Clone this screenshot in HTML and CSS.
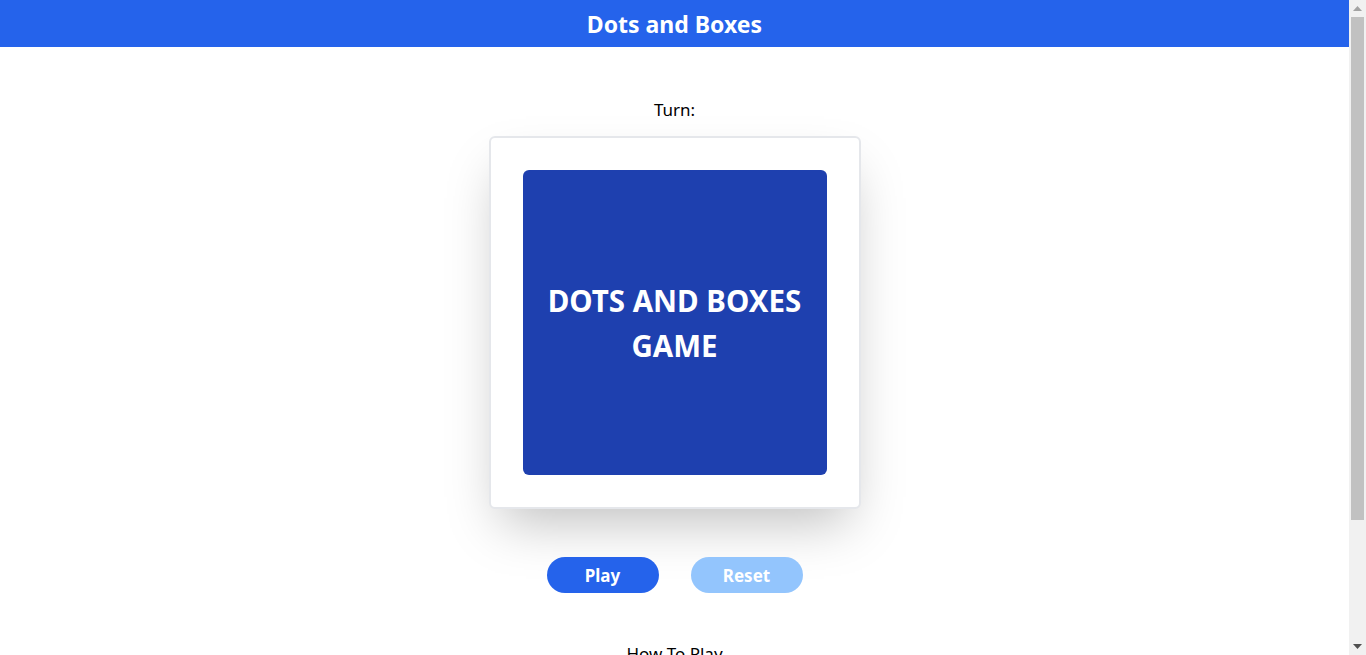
FILE: index.html
```
<!DOCTYPE html>
<html lang="en">

<head>
    <meta charset="UTF-8">
    <title>Dots and Boxes</title>
    <link rel="stylesheet" href="styles.css">
</head>

<body>
    <header class="top_bar">
        <h1>Dots and Boxes</h1>
    </header>

    <main class="game">
        <p class="turn">Turn: <span id="turn_name"></span></p>
        <div class="board_card">
            <div class="board">
                <p>Dots and Boxes<br>Game</p>
            </div>
        </div>
        <div class="controls">
            <button class="btn btn_play">Play</button>
            <button class="btn btn_reset" disabled>Reset</button>
        </div>
        <section class="rules">
            <h2>How To Play</h2>
            <ol>
                <li>Players take turns joining two adjacent dots with a line.</li>
                <li>Completing the fourth side of a box claims it and earns another turn.</li>
                <li>The game ends when every box is claimed.</li>
                <li>The player with the most boxes wins.</li>
            </ol>
        </section>
    </main>

    <!-- window scrollbar -->
    <div class="scroll_bar">
        <div class="scroll_btn">
            <svg width="9" height="5" viewBox="0 0 9 5"><polygon points="0,5 9,5 4.5,0" fill="#a3a3a3"/></svg>
        </div>
        <div class="scroll_track">
            <div class="scroll_thumb"></div>
        </div>
        <div class="scroll_btn">
            <svg width="9" height="5" viewBox="0 0 9 5"><polygon points="0,0 9,0 4.5,5" fill="#505050"/></svg>
        </div>
    </div>
</body>

</html>
```

FILE: styles.css
```
* {
    margin: 0;
    padding: 0;
    box-sizing: border-box;
}

html {
    overflow: hidden;
}

body {
    font-family: "Noto Sans", "Open Sans", sans-serif;
    color: #000;
    background: #fff;
    margin-right: 17px;
}

.top_bar {
    height: 47px;
    background: #2563eb;
    display: flex;
    align-items: center;
    justify-content: center;
}

.top_bar h1 {
    color: #fff;
    font-size: 23px;
    font-weight: 700;
}

.game {
    display: flex;
    flex-direction: column;
    align-items: center;
    padding-top: 53px;
    padding-bottom: 24px;
}

.turn {
    font-size: 17px;
    line-height: 20px;
    margin-bottom: 16px;
}

.board_card {
    width: 372px;
    height: 373px;
    padding: 32px;
    background: #fff;
    border: 2px solid #e5e7eb;
    border-radius: 6px;
    box-shadow: 0 25px 50px -12px rgba(0, 0, 0, 0.25);
}

.board {
    width: 100%;
    height: 100%;
    background: #1e40af;
    border-radius: 6px;
    display: flex;
    align-items: center;
    justify-content: center;
}

.board p {
    color: #fff;
    font-size: 29.5px;
    font-weight: 700;
    line-height: 45px;
    text-transform: uppercase;
    text-align: center;
}

.controls {
    display: flex;
    gap: 32px;
    margin-top: 48px;
}

.btn {
    width: 112px;
    height: 36px;
    border: none;
    border-radius: 18px;
    color: #fff;
    font-family: inherit;
    font-size: 17px;
    font-weight: 700;
    cursor: pointer;
}

.btn_play {
    background: #2563eb;
}

.btn_reset {
    background: #93c5fd;
    cursor: default;
}

.rules {
    margin-top: 51px;
    width: 600px;
    text-align: center;
}

.rules h2 {
    font-size: 17px;
    font-weight: 400;
    line-height: 20px;
    margin-bottom: 16px;
}

.rules ol {
    text-align: left;
    padding-left: 20px;
    line-height: 28px;
}

.scroll_bar {
    position: fixed;
    top: 0;
    right: 0;
    width: 17px;
    height: 100vh;
    background: #f1f1f1;
    display: flex;
    flex-direction: column;
}

.scroll_btn {
    height: 17px;
    display: flex;
    align-items: center;
    justify-content: center;
}

.scroll_track {
    flex: 1;
    padding: 0 2px;
}

.scroll_thumb {
    height: 503px;
    background: #c1c1c1;
}
```
